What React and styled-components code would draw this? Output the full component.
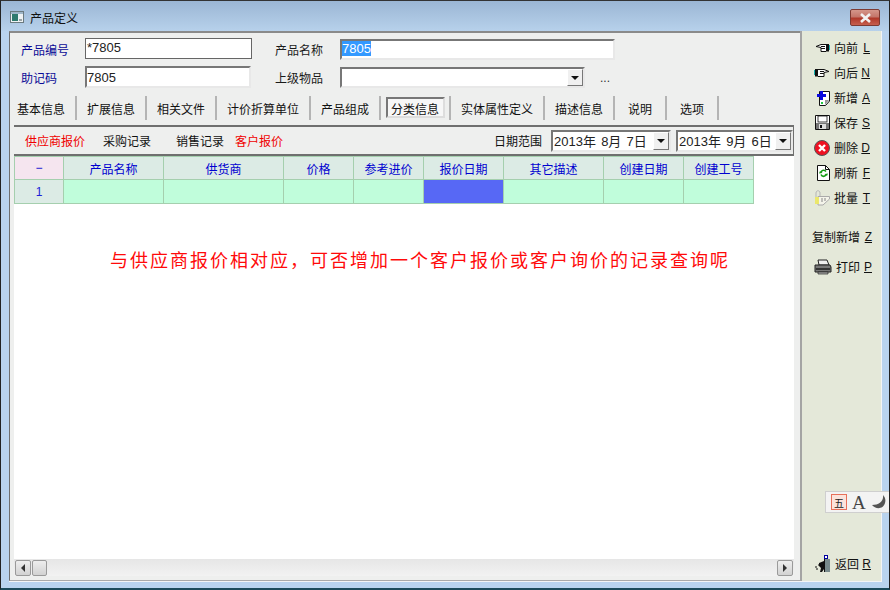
import React from 'react';
import styled, { createGlobalStyle } from 'styled-components';

const GlobalStyle = createGlobalStyle`
  html, body {
    margin: 0;
    padding: 0;
    background: #b9d3ee;
  }
  * {
    box-sizing: border-box;
  }
`;

const FONT = `"Liberation Sans", "Noto Sans CJK SC", sans-serif`;

const Window = styled.div`
  position: relative;
  width: 890px;
  height: 590px;
  overflow: hidden;
  display: flex;
  flex-direction: column;
  font-family: ${FONT};
  font-size: 12px;
  color: #111;
  background: #b9d3ee;
  border-top: 1px solid #333;
  border-left: 1px solid #222;
  border-right: 1px solid #222;
  border-bottom: 2px solid #1c4a5a;
`;

const TitleBar = styled.div`
  height: 30px;
  flex: none;
  display: flex;
  align-items: center;
  padding: 2px 9px 0 9px;
  gap: 6px;
  background: linear-gradient(#9bb6d4, #b7d1eb);
`;

const Title = styled.span`
  flex: 1;
  font-size: 12px;
  color: #111;
`;

const CloseButton = styled.div`
  width: 30px;
  height: 17px;
  margin-top: 1px;
  display: flex;
  align-items: center;
  justify-content: center;
  border: 1px solid #7d3a32;
  border-radius: 2px;
  background: linear-gradient(#d5968a 0%, #c4766a 45%, #b0392a 55%, #c65f4e 100%);
`;

const Body = styled.div`
  flex: 1;
  min-height: 0;
  display: flex;
  margin: 0 7px 6px 8px;
  background: #f4f4f4;
  border-bottom: 1px solid #f4f4f4;
`;

const Main = styled.div`
  flex: 1;
  min-width: 0;
  display: flex;
  flex-direction: column;
  background: #eeefee;
  border-top: 2px solid #8a8a8a;
  border-left: 1px solid #6f6f6f;
  padding-left: 4px;
  padding-bottom: 4px;
  border-bottom: 1px solid #a9a9a9;
`;

const Side = styled.div`
  width: 82px;
  flex: none;
  display: flex;
  flex-direction: column;
  align-items: stretch;
  background: #e4e8d9;
  border-left: 2px solid #a4a4a4;
  border-right: 1px solid #f4f4f4;
  padding-top: 4px;
  padding-bottom: 5px;
`;

const FormGrid = styled.div`
  display: grid;
  grid-template-columns: 64px 190px 65px 1fr;
  grid-template-rows: 22px 22px;
  row-gap: 6px;
  padding: 5px 0 0 7px;
  height: 58px;
  flex: none;
`;

const Label = styled.label`
  display: flex;
  align-items: center;
  font-size: 12px;
  color: ${p => (p.$plain ? '#1a1a1a' : '#0a0a96')};
`;

const TextBox = styled.div`
  width: ${p => p.$w}px;
  height: ${p => p.$h || 22}px;
  margin-top: ${p => p.$mt || 0}px;
  display: flex;
  align-items: center;
  padding-left: ${p => (p.$flat ? 1 : 0)}px;
  padding-bottom: ${p => p.$pb || 0}px;
  font-size: 13px;
  background: #fff;
  color: #222;
  border: ${p => (p.$flat ? '1px solid #666' : '2px solid')};
  border-color: ${p => (p.$flat ? '#666' : '#777 #e8e8e8 #e8e8e8 #777')};
`;

const Selected = styled.span`
  background: #3399ff;
  color: #fff;
  line-height: 15px;
`;

const Combo = styled(TextBox)`
  justify-content: flex-end;
  padding: 0;
`;

const DropButton = styled.div`
  width: 16px;
  flex: none;
  height: 100%;
  display: flex;
  align-items: center;
  justify-content: center;
  background: #f0f0f0;
  border: 1px solid;
  border-color: #fff #777 #777 #fff;
  &::after {
    content: '';
    border-left: 4px solid transparent;
    border-right: 4px solid transparent;
    border-top: 4px solid #111;
  }
`;

const ComboRow = styled.div`
  display: flex;
  align-items: center;
  gap: 15px;
`;

const Dots = styled.span`
  font-size: 12px;
  color: #333;
  margin-top: 2px;
`;

const TabStrip = styled.div`
  display: flex;
  height: 24px;
  flex: none;
  margin: 5px 0 0 -7px;
`;

const Tab = styled.div`
  width: ${p => p.$w}px;
  display: flex;
  align-items: center;
  justify-content: center;
  position: relative;
  z-index: 0;
  font-size: 12px;
  color: #111;
  border-right: 2px solid #b4b4b4;
  ${p => p.$active && `
    &::before {
      content: '';
      position: absolute;
      inset: 1px 4px 2px 5px;
      background: #f7f7f7;
      border: 2px solid;
      border-color: #777 #ddd #ddd #777;
      z-index: -1;
    }
  `}
`;

const SubBar = styled.div`
  height: 31px;
  flex: none;
  margin-top: 5px;
  width: 780px;
  display: flex;
  align-items: center;
  border-top: 2px solid #6f6f6f;
  border-bottom: 2px solid #6f6f6f;
  border-right: 1px solid #6f6f6f;
  padding-left: 11px;
`;

const SubTab = styled.span`
  width: ${p => p.$w}px;
  font-size: 12px;
  color: ${p => (p.$red ? '#f00000' : '#111')};
`;

const DateArea = styled.div`
  margin-left: auto;
  display: flex;
  align-items: center;
  height: 100%;
`;

const DateLabel = styled.span`
  margin-right: 9px;
  font-size: 12px;
  color: #111;
`;

const DateBox = styled.div`
  width: ${p => p.$w}px;
  height: 22px;
  margin-right: ${p => p.$gap}px;
  display: flex;
  align-items: center;
  justify-content: space-between;
  font-size: 13px;
  word-spacing: -1px;
  background: #fff;
  color: #222;
  padding-left: 1px;
  border: 2px solid;
  border-color: #777 #e8e8e8 #e8e8e8 #777;
  white-space: pre;
`;

const Sheet = styled.div`
  flex: 1;
  min-height: 0;
  width: 780px;
  background: #fff;
  display: flex;
  flex-direction: column;
`;

const Grid = styled.div`
  display: grid;
  grid-template-columns: 49px 100px 120px 70px 70px 80px 100px 80px 70px;
  grid-template-rows: 23px 24px;
  width: 740px;
  flex: none;
  border-top: 1px solid #a5cfae;
  border-left: 1px solid #a5cfae;
`;

const HeadCell = styled.div`
  display: flex;
  align-items: center;
  justify-content: center;
  font-size: 12px;
  color: #0000d0;
  background: ${p => (p.$corner ? '#f5e5ef' : '#dcebe5')};
  border-right: 1px solid #a5cfae;
  border-bottom: 1px solid #a5cfae;
`;

const DataCell = styled.div`
  display: flex;
  align-items: center;
  justify-content: center;
  font-size: 12px;
  color: #2020d8;
  background: ${p => (p.$selected ? '#5768f5' : '#c0fddb')};
  border-right: 1px solid #a5cfae;
  border-bottom: 1px solid #a5cfae;
`;

const RowHead = styled(DataCell)`
  background: #dcebe5;
`;

const Note = styled.div`
  margin: 45px 0 0 96px;
  font-size: 18px;
  letter-spacing: 2px;
  line-height: 24px;
  white-space: nowrap;
  color: #ff0a0a;
`;

const ScrollBar = styled.div`
  height: 17px;
  flex: none;
  width: 780px;
  display: flex;
  align-items: center;
  background: linear-gradient(#e6e6e6, #f2f2f2);
`;

const ScrollButton = styled.div`
  width: ${p => p.$w || 15}px;
  height: 16px;
  margin-left: ${p => p.$ml || 0}px;
  margin-right: ${p => p.$mr || 0}px;
  display: flex;
  align-items: center;
  justify-content: center;
  background: linear-gradient(#eeeeee, #d2d2d2);
  border: 1px solid #9a9a9a;
  border-radius: 2px;
`;

const Arrow = styled.span`
  width: 0;
  height: 0;
  border-top: 4px solid transparent;
  border-bottom: 4px solid transparent;
  ${p => (p.$right ? 'border-left: 4px solid #333;' : 'border-right: 4px solid #333;')}
`;

const Track = styled.div`
  flex: 1;
`;

const ActionRow = styled.div`
  height: 25px;
  flex: none;
  margin-top: ${p => p.$mt || 0}px;
  display: flex;
  align-items: center;
  justify-content: flex-end;
  padding-right: ${p => p.$pr ?? 11}px;
  font-size: 12px;
  color: #111;
`;

const IconSlot = styled.span`
  display: flex;
  align-items: center;
  margin-right: 4px;
`;

const Spacer = styled.div`
  flex: 1;
`;

const Key = styled.span`
  width: 12px;
  text-align: right;
  font-size: 12px;
  text-decoration: underline;
  color: #111;
`;

const ImeBar = styled.div`
  position: absolute;
  left: 824px;
  top: 490px;
  width: 65px;
  height: 22px;
  display: flex;
  align-items: center;
  gap: 5px;
  padding-left: 5px;
  background: #f3f3f3;
  border: 1px solid #cfcfcf;
  border-right: none;
`;

const ImeBox = styled.div`
  width: 16px;
  height: 16px;
  display: flex;
  align-items: center;
  justify-content: center;
  font-size: 10px;
  color: #222;
  background: #fbe3dc;
  border: 1px solid #e8705a;
`;

const ImeLetter = styled.span`
  font-family: "Liberation Serif", serif;
  font-size: 19px;
  line-height: 1;
  color: #444;
`;

const AppIcon = () => (
  <svg width="14" height="12" viewBox="0 0 14 12">
    <rect x="0.5" y="0.5" width="13" height="11" fill="#eef2f4" stroke="#6b7a80" />
    <rect x="1" y="1" width="12" height="2" fill="#9fb6c8" />
    <rect x="2" y="3" width="6" height="7" fill="#2f7a6e" />
    <rect x="9" y="8" width="3" height="2" fill="#9aa4a8" />
  </svg>
);

const CloseGlyph = () => (
  <svg width="13" height="10" viewBox="0 0 13 10">
    <path d="M2 1 L11 9 M11 1 L2 9" stroke="#f2f2f2" strokeWidth="2.6" />
  </svg>
);

const HandLeft = () => (
  <svg width="15" height="10" viewBox="0 0 15 10">
    <path d="M14 1.5H6L1 3.5 6 4.5 6 8.5H11" fill="#fff" stroke="#111" />
    <path d="M6 3.5H10M6 5.5H10" stroke="#111" />
    <rect x="11" y="1" width="3" height="7.5" fill="#111" />
    <rect x="14" y="2" width="1" height="5" fill="#18b0b0" />
  </svg>
);

const HandRight = () => (
  <svg width="16" height="10" viewBox="0 0 16 10">
    <path d="M4 1.5H10L15 3.5 10 4.5 10 8.5H4" fill="#fff" stroke="#111" />
    <path d="M6 3.5H10M6 5.5H10" stroke="#111" />
    <rect x="1" y="1" width="3" height="7.5" fill="#111" />
    <rect x="0" y="2" width="1" height="5" fill="#18b0b0" />
  </svg>
);

const NewIcon = () => (
  <svg width="13" height="16" viewBox="0 0 13 16">
    <path d="M2.5 1.5H12.5V11L8.5 15.5H2.5Z" fill="#fff" stroke="#111" />
    <path d="M8 10h4l-4 5z" fill="#999" />
    <rect x="3" y="1" width="3" height="9" fill="#0808e0" />
    <rect x="0" y="4" width="9" height="3" fill="#0808e0" />
    <rect x="4" y="12" width="2" height="2" fill="#22cc44" />
  </svg>
);

const SaveIcon = () => (
  <svg width="15" height="15" viewBox="0 0 15 15">
    <path d="M0.5 0.5H14.5V14.5H0.5Z" fill="#fff" stroke="#111" />
    <rect x="1" y="8" width="13" height="6" fill="#777" />
    <rect x="3" y="1" width="9" height="6" fill="#fff" stroke="#111" strokeWidth="0.8" />
    <rect x="4" y="9" width="7" height="5" fill="#ddd" />
    <rect x="5" y="10" width="2" height="3" fill="#111" />
  </svg>
);

const DeleteIcon = () => (
  <svg width="16" height="16" viewBox="0 0 16 16">
    <circle cx="8" cy="8" r="7.5" fill="#ee1122" stroke="#555" strokeWidth="1" />
    <path d="M5 5 L11 11 M11 5 L5 11" stroke="#fff" strokeWidth="2.4" />
  </svg>
);

const RefreshIcon = () => (
  <svg width="13" height="16" viewBox="0 0 13 16">
    <path d="M0.5 0.5H8.5L12.5 4.5V15.5H0.5Z" fill="#fff" stroke="#111" />
    <path d="M8.5 0.5V4.5H12.5" fill="none" stroke="#111" />
    <path d="M9 6.5C7.5 4.5 4.5 5 4 7.5M4 9.5C5 12 8 12 9 9.5" fill="none" stroke="#119911" strokeWidth="1.6" />
    <path d="M3 6l2.5 2L2 8.5zM10 11l-2.5-2 3.5-.5z" fill="#119911" />
  </svg>
);

const BatchIcon = () => (
  <svg width="16" height="16" viewBox="0 0 16 16">
    <path d="M2 14V3C2 0 6 0 6 3V12" fill="none" stroke="#b5b5b5" />
    <path d="M4 6.5H15.5V9L9 15H4Z" fill="#f4f4ea" stroke="#aaa" />
    <path d="M1 7h4v7H1z" fill="#f2ee55" opacity="0.8" />
    <path d="M8 8V12M11 8V11" stroke="#888" />
  </svg>
);

const PrintIcon = () => (
  <svg width="18" height="16" viewBox="0 0 18 16">
    <path d="M4 1H13L15 6H5Z" fill="#eee" stroke="#222" />
    <path d="M1 6H16L17 8V13H1Z" fill="#777" stroke="#222" />
    <rect x="2" y="9" width="14" height="2" fill="#333" />
    <path d="M4 13H14V15H4Z" fill="#aaa" stroke="#222" strokeWidth="0.7" />
  </svg>
);

const ExitIcon = () => (
  <svg width="16" height="18" viewBox="0 0 16 18">
    <rect x="9.5" y="0.5" width="3" height="3" fill="#fff" stroke="#0000a0" />
    <rect x="10" y="4" width="5" height="13" fill="#788a8c" />
    <path d="M10 4H9V17H10Z" fill="#111" />
    <path d="M4 8L9 6V14L7 17H5L6 13 4 11Z" fill="#111" />
    <path d="M0 12h2M1 14h2M3 10h1" stroke="#111" />
  </svg>
);

const MoonIcon = () => (
  <svg width="15" height="14" viewBox="0 0 15 14">
    <path d="M12 0C13 6 8 10 1 10C4 14 12 15 14 8C15 5 14 2 12 0Z" fill="#555" />
  </svg>
);

const tabs = [
  ['基本信息', 70], ['扩展信息', 70], ['相关文件', 70], ['计价折算单位', 94], ['产品组成', 70],
  ['分类信息', 70, true], ['实体属性定义', 94], ['描述信息', 70], ['说明', 52], ['选项', 52],
];

const columns = ['产品名称', '供货商', '价格', '参考进价', '报价日期', '其它描述', '创建日期', '创建工号'];

function Action({ icon, label, hotkey, pr, mt }) {
  return (
    <ActionRow $pr={pr} $mt={mt}>
      {icon && <IconSlot>{icon}</IconSlot>}
      <span>{label}</span>
      <Key>{hotkey}</Key>
    </ActionRow>
  );
}

export default function App() {
  return (
    <>
      <GlobalStyle />
      <Window>
        <TitleBar>
          <AppIcon />
          <Title>产品定义</Title>
          <CloseButton><CloseGlyph /></CloseButton>
        </TitleBar>
        <Body>
          <Main>
            <FormGrid>
              <Label>产品编号</Label>
              <TextBox $w={167} $h={21} $pb={2} $flat>*7805</TextBox>
              <Label $plain>产品名称</Label>
              <TextBox $w={275} $h={21} $mt={1} $pb={2}><Selected>7805</Selected></TextBox>
              <Label>助记码</Label>
              <TextBox $w={166}>7805</TextBox>
              <Label $plain>上级物品</Label>
              <ComboRow>
                <Combo $w={245} $h={21} $mt={1}><DropButton /></Combo>
                <Dots>...</Dots>
              </ComboRow>
            </FormGrid>
            <TabStrip>
              {tabs.map(([name, w, active]) => (
                <Tab key={name} $w={w} $active={active}>{name}</Tab>
              ))}
            </TabStrip>
            <SubBar>
              <SubTab $w={78} $red>供应商报价</SubTab>
              <SubTab $w={73}>采购记录</SubTab>
              <SubTab $w={59}>销售记录</SubTab>
              <SubTab $w={60} $red>客户报价</SubTab>
              <DateArea>
                <DateLabel>日期范围</DateLabel>
                <DateBox $w={120} $gap={5}>2013年  8月  7日<DropButton /></DateBox>
                <DateBox $w={117} $gap={0}>2013年  9月  6日<DropButton /></DateBox>
              </DateArea>
            </SubBar>
            <Sheet>
              <Grid>
                <HeadCell $corner>−</HeadCell>
                {columns.map(name => <HeadCell key={name}>{name}</HeadCell>)}
                <RowHead>1</RowHead>
                {columns.map(name => (
                  <DataCell key={name} $selected={name === '报价日期'} />
                ))}
              </Grid>
              <Note>与供应商报价相对应，可否增加一个客户报价或客户询价的记录查询呢</Note>
            </Sheet>
            <ScrollBar>
              <ScrollButton $w={16} $ml={1} $mr={1}><Arrow /></ScrollButton>
              <ScrollButton $w={15} />
              <Track />
              <ScrollButton $w={16} $mr={1}><Arrow $right /></ScrollButton>
            </ScrollBar>
          </Main>
          <Side>
            <Action icon={<HandLeft />} label="向前" hotkey="L" />
            <Action icon={<HandRight />} label="向后" hotkey="N" />
            <Action icon={<NewIcon />} label="新增" hotkey="A" />
            <Action icon={<SaveIcon />} label="保存" hotkey="S" />
            <Action icon={<DeleteIcon />} label="删除" hotkey="D" />
            <Action icon={<RefreshIcon />} label="刷新" hotkey="F" />
            <Action icon={<BatchIcon />} label="批量" hotkey="T" />
            <Action label="复制新增" hotkey="Z" pr={9} mt={14} />
            <Action icon={<PrintIcon />} label="打印" hotkey="P" pr={9} mt={5} />
            <Spacer />
            <Action icon={<ExitIcon />} label="返回" hotkey="R" pr={10} />
          </Side>
        </Body>
        <ImeBar>
          <ImeBox>五</ImeBox>
          <ImeLetter>A</ImeLetter>
          <MoonIcon />
        </ImeBar>
      </Window>
    </>
  );
}
